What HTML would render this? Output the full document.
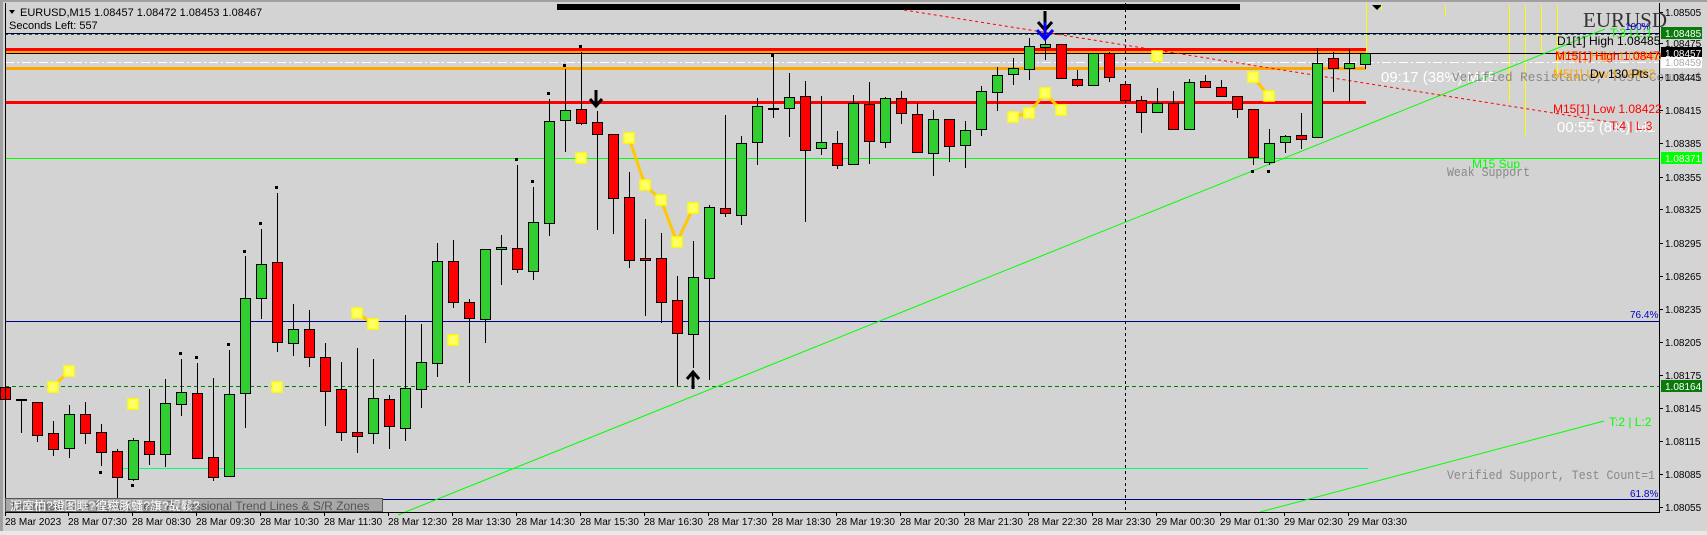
<!DOCTYPE html>
<html><head><meta charset="utf-8"><style>
html,body{margin:0;padding:0;background:#d4d4d4;}
svg{display:block;font-family:"Liberation Sans","Noto Sans CJK SC",sans-serif;}
</style></head><body>
<svg width="1707" height="535" viewBox="0 0 1707 535" xmlns="http://www.w3.org/2000/svg">
<rect x="0" y="0" width="1707" height="535" fill="#d4d4d4"/>
<rect x="5" y="3" width="1654" height="509" fill="#d3d3d3"/>
<rect x="0" y="0" width="1707" height="2" fill="#a0a0a0"/>
<rect x="0" y="0" width="3" height="535" fill="#a0a0a0"/>
<rect x="0" y="531" width="1707" height="4" fill="#e8e8e8"/>
<rect x="557" y="4" width="683" height="6" fill="#000"/>
<polygon points="1372,5 1382,5 1377,10" fill="#000"/>
<g stroke="#ffff00" stroke-width="1">
<line x1="1366.5" y1="3" x2="1366.5" y2="60"/>
<line x1="1381.5" y1="5" x2="1381.5" y2="10"/>
<line x1="1445.5" y1="5" x2="1445.5" y2="16"/>
<line x1="1509.5" y1="5" x2="1509.5" y2="102"/>
<line x1="1525.5" y1="5" x2="1525.5" y2="135"/>
<line x1="1541.5" y1="5" x2="1541.5" y2="55"/>
<line x1="1557.5" y1="5" x2="1557.5" y2="75"/>
</g>
<line x1="5" y1="33.5" x2="1659" y2="33.5" stroke="#000040" stroke-width="1"/>
<line x1="5" y1="34.5" x2="1659" y2="34.5" stroke="#1a6a1a" stroke-width="1" stroke-dasharray="3,3"/>
<rect x="5" y="48" width="1361" height="3" fill="#ff0000"/>
<rect x="5" y="51" width="1361" height="2" fill="#ffa500"/>
<line x1="5" y1="53.5" x2="1659" y2="53.5" stroke="#000" stroke-width="1"/>
<line x1="5" y1="62.5" x2="1659" y2="62.5" stroke="#fff" stroke-width="1" stroke-dasharray="9,3,2,3"/>
<rect x="5" y="67" width="1361" height="3" fill="#ffa500"/>
<rect x="5" y="101" width="1361" height="3" fill="#ff0000"/>
<line x1="5" y1="158.5" x2="1659" y2="158.5" stroke="#00ff00" stroke-width="1"/>
<line x1="5" y1="321.5" x2="1659" y2="321.5" stroke="#00008b" stroke-width="1"/>
<line x1="5" y1="386.5" x2="1659" y2="386.5" stroke="#008000" stroke-width="1" stroke-dasharray="4,3"/>
<line x1="117" y1="468.5" x2="1368" y2="468.5" stroke="#00ff7f" stroke-width="1"/>
<line x1="5" y1="499.5" x2="1659" y2="499.5" stroke="#00008b" stroke-width="1"/>
<line x1="1125.5" y1="3" x2="1125.5" y2="512" stroke="#000" stroke-width="1" stroke-dasharray="3,3"/>
<line x1="398" y1="515" x2="1605" y2="29" stroke="#00ff00" stroke-width="1"/>
<line x1="1260" y1="512" x2="1604" y2="421" stroke="#00ff00" stroke-width="1"/>
<line x1="904" y1="10" x2="1610" y2="122" stroke="#ff0000" stroke-width="1" stroke-dasharray="3,3"/>
<g stroke="#ffc800" stroke-width="3" fill="none">
<polyline points="53,387 69,371"/>
<polyline points="357,313 373,324"/>
<polyline points="629,138 645,185 661,200 677,242 693,208"/>
<polyline points="1013,117 1029,113 1045,93 1061,110"/>
<polyline points="1253,77 1269,96"/>
</g>
<g stroke="#000" stroke-width="1">
<path d="M5.5 385V405M21.5 400V433M37.5 402V442M53.5 421V456M69.5 405V458M85.5 402V444M101.5 424V466M117.5 449V498M133.5 438V481M149.5 389V465M165.5 379V467M181.5 359V416M197.5 363V459M213.5 378V481M229.5 350V476M245.5 256V428M261.5 229V319M277.5 193V352M293.5 304V356M309.5 310V367M325.5 343V426M341.5 362V441M357.5 348V453M373.5 359V444M389.5 395V449M405.5 315V441M421.5 324V408M437.5 243V377M453.5 240V308M469.5 299V383M485.5 249V343M501.5 235V285M517.5 165V273M533.5 187V280M549.5 99V236M565.5 69V152M581.5 52V125M597.5 111V230M613.5 134V234M629.5 172V268M645.5 219V316M661.5 233V323M677.5 276V386M693.5 241V368M709.5 205V380M725.5 115V217M741.5 136V225M757.5 98V165M773.5 55V118M789.5 73V137M805.5 81V222M821.5 96V155M837.5 131V169M853.5 95V165M869.5 82V164M885.5 97V148M901.5 91V124M917.5 103V153M933.5 110V176M949.5 119V162M965.5 121V168M981.5 86V136M997.5 67V111M1013.5 58V85M1029.5 38V80M1045.5 40V60M1061.5 44V79M1077.5 70V87M1093.5 53V86M1109.5 52V82M1125.5 84V103M1141.5 96V133M1157.5 88V112M1173.5 91V129M1189.5 79V129M1205.5 75V87M1221.5 80V97M1237.5 96V118M1253.5 109V165M1269.5 129V165M1285.5 135V153M1301.5 113V149M1317.5 48V137M1333.5 52V92M1349.5 49V102M1365.5 53V69"/>
</g>
<g stroke="#000" stroke-width="1" fill="#ff0000">
<rect x="0.5" y="387.5" width="10" height="12"/>
<rect x="32.5" y="402.5" width="10" height="33"/>
<rect x="48.5" y="433.5" width="10" height="16"/>
<rect x="80.5" y="414.5" width="10" height="19"/>
<rect x="96.5" y="432.5" width="10" height="20"/>
<rect x="112.5" y="451.5" width="10" height="26"/>
<rect x="144.5" y="441.5" width="10" height="13"/>
<rect x="192.5" y="393.5" width="10" height="65"/>
<rect x="208.5" y="457.5" width="10" height="20"/>
<rect x="272.5" y="262.5" width="10" height="80"/>
<rect x="304.5" y="329.5" width="10" height="28"/>
<rect x="320.5" y="357.5" width="10" height="34"/>
<rect x="336.5" y="389.5" width="10" height="43"/>
<rect x="352.5" y="432.5" width="10" height="4"/>
<rect x="384.5" y="399.5" width="10" height="27"/>
<rect x="448.5" y="261.5" width="10" height="41"/>
<rect x="464.5" y="302.5" width="10" height="16"/>
<rect x="512.5" y="248.5" width="10" height="21"/>
<rect x="576.5" y="109.5" width="10" height="14"/>
<rect x="592.5" y="122.5" width="10" height="12"/>
<rect x="608.5" y="134.5" width="10" height="64"/>
<rect x="624.5" y="197.5" width="10" height="63"/>
<rect x="640.5" y="258.5" width="10" height="2"/>
<rect x="656.5" y="258.5" width="10" height="44"/>
<rect x="672.5" y="300.5" width="10" height="33"/>
<rect x="720.5" y="208.5" width="10" height="5"/>
<rect x="800.5" y="96.5" width="10" height="54"/>
<rect x="832.5" y="143.5" width="10" height="22"/>
<rect x="864.5" y="104.5" width="10" height="37"/>
<rect x="896.5" y="98.5" width="10" height="15"/>
<rect x="912.5" y="114.5" width="10" height="38"/>
<rect x="944.5" y="119.5" width="10" height="27"/>
<rect x="1056.5" y="44.5" width="10" height="34"/>
<rect x="1072.5" y="79.5" width="10" height="6"/>
<rect x="1104.5" y="53.5" width="10" height="24"/>
<rect x="1120.5" y="84.5" width="10" height="16"/>
<rect x="1136.5" y="100.5" width="10" height="12"/>
<rect x="1168.5" y="103.5" width="10" height="26"/>
<rect x="1200.5" y="81.5" width="10" height="6"/>
<rect x="1216.5" y="87.5" width="10" height="9"/>
<rect x="1232.5" y="96.5" width="10" height="13"/>
<rect x="1248.5" y="109.5" width="10" height="48"/>
<rect x="1296.5" y="135.5" width="10" height="4"/>
<rect x="1328.5" y="58.5" width="10" height="10"/>
</g>
<g stroke="#000" stroke-width="1" fill="#32cd32">
<rect x="64.5" y="414.5" width="10" height="34"/>
<rect x="128.5" y="440.5" width="10" height="39"/>
<rect x="160.5" y="403.5" width="10" height="51"/>
<rect x="176.5" y="392.5" width="10" height="12"/>
<rect x="224.5" y="394.5" width="10" height="82"/>
<rect x="240.5" y="298.5" width="10" height="95"/>
<rect x="256.5" y="264.5" width="10" height="34"/>
<rect x="288.5" y="329.5" width="10" height="14"/>
<rect x="368.5" y="398.5" width="10" height="35"/>
<rect x="400.5" y="388.5" width="10" height="40"/>
<rect x="416.5" y="362.5" width="10" height="27"/>
<rect x="432.5" y="261.5" width="10" height="102"/>
<rect x="480.5" y="249.5" width="10" height="70"/>
<rect x="496.5" y="247.5" width="10" height="2"/>
<rect x="528.5" y="222.5" width="10" height="49"/>
<rect x="544.5" y="121.5" width="10" height="102"/>
<rect x="560.5" y="110.5" width="10" height="10"/>
<rect x="688.5" y="277.5" width="10" height="57"/>
<rect x="704.5" y="207.5" width="10" height="71"/>
<rect x="736.5" y="143.5" width="10" height="72"/>
<rect x="752.5" y="106.5" width="10" height="36"/>
<rect x="784.5" y="97.5" width="10" height="11"/>
<rect x="816.5" y="142.5" width="10" height="6"/>
<rect x="848.5" y="103.5" width="10" height="61"/>
<rect x="880.5" y="98.5" width="10" height="44"/>
<rect x="928.5" y="119.5" width="10" height="34"/>
<rect x="960.5" y="130.5" width="10" height="15"/>
<rect x="976.5" y="91.5" width="10" height="38"/>
<rect x="992.5" y="75.5" width="10" height="17"/>
<rect x="1008.5" y="68.5" width="10" height="6"/>
<rect x="1024.5" y="46.5" width="10" height="23"/>
<rect x="1040.5" y="44.5" width="10" height="3"/>
<rect x="1088.5" y="53.5" width="10" height="32"/>
<rect x="1152.5" y="103.5" width="10" height="9"/>
<rect x="1184.5" y="82.5" width="10" height="47"/>
<rect x="1264.5" y="143.5" width="10" height="19"/>
<rect x="1280.5" y="136.5" width="10" height="6"/>
<rect x="1312.5" y="63.5" width="10" height="74"/>
<rect x="1344.5" y="63.5" width="10" height="5"/>
<rect x="1360.5" y="53.5" width="10" height="11"/>
</g>
<rect x="16" y="399" width="11" height="2" fill="#000"/>
<rect x="768" y="108" width="11" height="2" fill="#000"/>
<g fill="#000">
<rect x="99" y="471" width="3" height="3"/><rect x="131" y="484" width="3" height="3"/>
<rect x="179" y="352" width="3" height="3"/><rect x="195" y="356" width="3" height="3"/>
<rect x="227" y="343" width="3" height="3"/><rect x="243" y="250" width="3" height="3"/>
<rect x="259" y="222" width="3" height="3"/><rect x="275" y="186" width="3" height="3"/>
<rect x="515" y="158" width="3" height="3"/><rect x="531" y="180" width="3" height="3"/>
<rect x="547" y="92" width="3" height="3"/><rect x="563" y="64" width="3" height="3"/>
<rect x="579" y="45" width="3" height="3"/><rect x="771" y="54" width="3" height="3"/>
<rect x="1251" y="170" width="3" height="3"/><rect x="1267" y="170" width="3" height="3"/>
</g>
<g fill="#ffff66" stroke="#ffff00" stroke-width="1.5">
<rect x="48" y="382" width="10" height="10"/><rect x="64" y="366" width="10" height="10"/>
<rect x="128" y="399" width="10" height="10"/><rect x="272" y="382" width="10" height="10"/>
<rect x="352" y="308" width="10" height="10"/><rect x="368" y="319" width="10" height="10"/>
<rect x="448" y="335" width="10" height="10"/><rect x="576" y="153" width="10" height="10"/>
<rect x="624" y="133" width="10" height="10"/><rect x="640" y="180" width="10" height="10"/>
<rect x="656" y="195" width="10" height="10"/><rect x="672" y="237" width="10" height="10"/>
<rect x="688" y="203" width="10" height="10"/>
<rect x="1008" y="112" width="10" height="10"/><rect x="1024" y="108" width="10" height="10"/>
<rect x="1040" y="88" width="10" height="10"/><rect x="1056" y="105" width="10" height="10"/>
<rect x="1152" y="51" width="10" height="10"/>
<rect x="1248" y="72" width="10" height="10"/><rect x="1264" y="91" width="10" height="10"/>
</g>
<path d="M596 90V105M590 99L596 106L602 99" stroke="#000" stroke-width="3" fill="none"/>
<path d="M693 389V373M687 379L693 372L699 379" stroke="#000" stroke-width="3" fill="none"/>
<path d="M1045 11V38M1038 22L1045 30L1052 22" stroke="#000" stroke-width="3" fill="none"/>
<path d="M1045 22V38M1037 30L1045 39L1053 30" stroke="#0000ff" stroke-width="3" fill="none"/>
<line x1="5.5" y1="3" x2="5.5" y2="512" stroke="#000"/>
<line x1="5" y1="512.5" x2="1660" y2="512.5" stroke="#000"/>
<line x1="1659.5" y1="3" x2="1659.5" y2="513" stroke="#000"/>
<polygon points="9,10 15,10 12,14" fill="#000"/>
<text x="20" y="16" font-size="11" fill="#000">EURUSD,M15  1.08457 1.08472 1.08453 1.08467</text>
<text x="9" y="29" font-size="11" fill="#000">Seconds Left:  557</text>
<text x="1583" y="27" font-size="21" fill="#333" font-family="Liberation Serif,serif">EURUSD</text>
<text x="1625" y="30" font-size="10" fill="#0000cc">100%</text>
<text x="1610" y="37" font-size="12" fill="#00ff00">T:3 | L:1</text>
<text x="1557" y="45" font-size="12" fill="#000">D1[1] High 1.08485</text>
<text x="1557" y="60" font-size="12" fill="#ffa500">M5[1] High 1.08466</text>
<text x="1555" y="60" font-size="12" fill="#ff0000">M15[1] High 1.08470</text>
<text x="1381" y="82" font-size="15" fill="#ffffff">09:17 (38%) M15</text>
<text x="1452" y="81" font-size="13" fill="#888" font-family="Liberation Mono,monospace" textLength="250" lengthAdjust="spacingAndGlyphs">Verified Resistance, Test Count=1</text>
<text x="1553" y="78" font-size="12" fill="#ffa500">M5[1] Low 1.08452</text>
<text x="1590" y="78" font-size="12" fill="#000">Dv 130 Pts</text>
<text x="1553" y="113" font-size="12" fill="#ff0000">M15[1] Low 1.08422</text>
<text x="1557" y="132" font-size="15" fill="#ffffff">00:55 (8%) M1</text>
<text x="1610" y="130" font-size="12" fill="#ff0000">T:4 | L:3</text>
<text x="1472" y="168" font-size="12" fill="#00ff00">M15 Sup</text>
<text x="1447" y="176" font-size="13" fill="#888" font-family="Liberation Mono,monospace" textLength="83" lengthAdjust="spacingAndGlyphs">Weak Support</text>
<text x="1630" y="318" font-size="10" fill="#0000cc">76.4%</text>
<text x="1609" y="426" font-size="12" fill="#00ff00">T:2 | L:2</text>
<text x="1447" y="479" font-size="13" fill="#888" font-family="Liberation Mono,monospace" textLength="208" lengthAdjust="spacingAndGlyphs">Verified Support, Test Count=1</text>
<text x="1630" y="497" font-size="10" fill="#0000cc">61.8%</text>
<rect x="5.5" y="498.5" width="377" height="13" fill="#a8a8a8" stroke="#555"/>
<text x="12" y="510" font-size="12" fill="#555">Unlimited Free Trend Lines : Professional Trend Lines &amp; S/R Zones</text>
<text x="10" y="510" font-size="12" fill="#fff">泥庢柏?镫图眶?徨糍豚蟠?旗?觇鬏?</text>
<g font-size="10" fill="#000">
<g stroke="#000"><path d="M1659 12.5h4M1659 43.5h4M1659 77.5h4M1659 110.5h4M1659 143.5h4M1659 177.5h4M1659 209.5h4M1659 243.5h4M1659 276.5h4M1659 309.5h4M1659 342.5h4M1659 375.5h4M1659 408.5h4M1659 441.5h4M1659 474.5h4M1659 507.5h4"/></g>
<text x="1665" y="16">1.08505</text><text x="1665" y="47">1.08475</text>
<text x="1665" y="81">1.08445</text><text x="1665" y="114">1.08415</text>
<text x="1665" y="147">1.08385</text><text x="1665" y="181">1.08355</text>
<text x="1665" y="213">1.08325</text><text x="1665" y="247">1.08295</text>
<text x="1665" y="280">1.08265</text><text x="1665" y="313">1.08235</text>
<text x="1665" y="346">1.08205</text><text x="1665" y="379">1.08175</text>
<text x="1665" y="412">1.08145</text><text x="1665" y="445">1.08115</text>
<text x="1665" y="478">1.08085</text><text x="1665" y="511">1.08055</text>
</g>
<rect x="1661" y="27" width="41" height="12" fill="#0a7a0a"/>
<text x="1665" y="37" font-size="10" fill="#fff">1.08485</text>
<rect x="1661" y="47" width="41" height="12" fill="#000"/>
<text x="1665" y="57" font-size="10" fill="#fff">1.08457</text>
<rect x="1661" y="57" width="41" height="11" fill="#fff"/>
<text x="1665" y="66" font-size="10" fill="#aaa">1.08459</text>
<rect x="1661" y="152" width="41" height="12" fill="#00ff00"/>
<text x="1665" y="162" font-size="10" fill="#fff">1.08371</text>
<rect x="1661" y="380" width="41" height="12" fill="#0a7a0a"/>
<text x="1665" y="390" font-size="10" fill="#fff">1.08164</text>
<g stroke="#000"><path d="M5.5 512v4M68.5 512v4M132.5 512v4M196.5 512v4M260.5 512v4M324.5 512v4M388.5 512v4M452.5 512v4M516.5 512v4M580.5 512v4M644.5 512v4M708.5 512v4M772.5 512v4M836.5 512v4M900.5 512v4M964.5 512v4M1028.5 512v4M1092.5 512v4M1156.5 512v4M1220.5 512v4M1284.5 512v4M1348.5 512v4"/></g>
<g font-size="10" fill="#000">
<text x="5" y="525">28 Mar 2023</text>
<text x="68" y="525">28 Mar 07:30</text><text x="132" y="525">28 Mar 08:30</text>
<text x="196" y="525">28 Mar 09:30</text><text x="260" y="525">28 Mar 10:30</text>
<text x="324" y="525">28 Mar 11:30</text><text x="388" y="525">28 Mar 12:30</text>
<text x="452" y="525">28 Mar 13:30</text><text x="516" y="525">28 Mar 14:30</text>
<text x="580" y="525">28 Mar 15:30</text><text x="644" y="525">28 Mar 16:30</text>
<text x="708" y="525">28 Mar 17:30</text><text x="772" y="525">28 Mar 18:30</text>
<text x="836" y="525">28 Mar 19:30</text><text x="900" y="525">28 Mar 20:30</text>
<text x="964" y="525">28 Mar 21:30</text><text x="1028" y="525">28 Mar 22:30</text>
<text x="1092" y="525">28 Mar 23:30</text><text x="1156" y="525">29 Mar 00:30</text>
<text x="1220" y="525">29 Mar 01:30</text><text x="1284" y="525">29 Mar 02:30</text>
<text x="1348" y="525">29 Mar 03:30</text>
</g>
</svg>
</body></html>
